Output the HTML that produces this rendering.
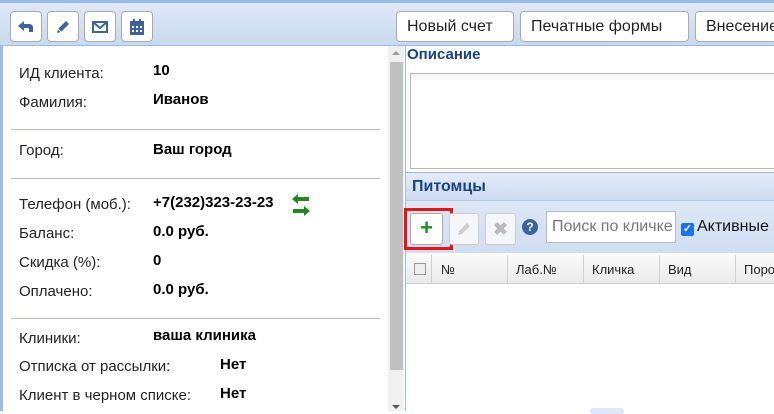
<!DOCTYPE html>
<html><head><meta charset="utf-8"><style>
*{box-sizing:border-box;margin:0;padding:0}
body{width:774px;height:411px;overflow:hidden;position:relative;background:#fff;font-family:"Liberation Sans",Arial,sans-serif;font-size:15px;color:#000}
.a{position:absolute}
.tb{left:0;top:0;width:774px;height:46px;background:linear-gradient(#dfe8f6,#c9d9ef);border-top:3px solid #99bbe8;border-bottom:1px solid #99bbe8}
.ib{position:absolute;top:8px;width:32px;height:31px;background:#fff;border:1px solid #aaa;border-radius:4px;display:flex;align-items:center;justify-content:center}
.tbtn{position:absolute;top:8px;height:31px;background:#fff;border:1px solid #aaa;border-radius:4px;font-size:16px;line-height:29px;padding:0 10px;color:#222;white-space:nowrap}
.lb{position:absolute;left:19px;font-size:15px;color:#222}
.v{position:absolute;font-weight:bold;font-size:15px}
.sep{position:absolute;left:11px;width:369px;height:1px;background:#bbbbcc}
</style></head><body>
<div class="a" style="left:0;top:46px;width:3px;height:365px;background:#99bbe8"></div>
<div class="a tb">
 <div class="ib" style="left:10px"><svg width="18" height="14" viewBox="0 0 18 14"><path d="M1 6 L7 1 V4 H12 Q16 4 16 8 V12 H12 V9 Q12 8 11 8 H7 V11 Z" fill="#3a63a0"/></svg></div>
 <div class="ib" style="left:47px"><svg width="16" height="16" viewBox="0 0 16 16"><path d="M2 14 L3 10 L11 2 L14 5 L6 13 Z" fill="#3a63a0"/><path d="M3 10 L6 13" stroke="#fff" stroke-width="1"/></svg></div>
 <div class="ib" style="left:84px"><svg width="16" height="12" viewBox="0 0 16 12"><rect x="1" y="1" width="14" height="10" fill="none" stroke="#3a63a0" stroke-width="2"/><path d="M1 1 L8 7 L15 1" fill="none" stroke="#3a63a0" stroke-width="2"/></svg></div>
 <div class="ib" style="left:121px"><svg width="14" height="16" viewBox="0 0 14 16"><rect x="0" y="2" width="14" height="14" fill="#3a63a0"/><rect x="3" y="0" width="2" height="4" fill="#3a63a0"/><rect x="9" y="0" width="2" height="4" fill="#3a63a0"/><g fill="#fff"><rect x="2" y="7" width="2" height="2"/><rect x="6" y="7" width="2" height="2"/><rect x="10" y="7" width="2" height="2"/><rect x="2" y="11" width="2" height="2"/><rect x="6" y="11" width="2" height="2"/><rect x="10" y="11" width="2" height="2"/></g></svg></div>
 <div class="tbtn" style="left:396px;width:118px">Новый счет</div>
 <div class="tbtn" style="left:520px;width:169px">Печатные формы</div>
 <div class="tbtn" style="left:695px;width:100px">Внесение</div>
</div>

<div class="lb" style="top:65px">ИД клиента:</div><div class="v" style="left:153px;top:62px">10</div>
<div class="lb" style="top:94px">Фамилия:</div><div class="v" style="left:153px;top:91px">Иванов</div>
<div class="sep" style="top:129px"></div>
<div class="lb" style="top:142px">Город:</div><div class="v" style="left:153px;top:141px">Ваш город</div>
<div class="sep" style="top:178px"></div>
<div class="lb" style="top:196px">Телефон (моб.):</div><div class="v" style="left:153px;top:194px">+7(232)323-23-23</div>
<svg class="a" style="left:291px;top:193px" width="20" height="24" viewBox="0 0 20 24"><path d="M1 6 L7 1 V4 H18 V8 H7 V11 Z" fill="#1e8a1e"/><path d="M19 18 L13 13 V16 H2 V20 H13 V23 Z" fill="#1e8a1e"/></svg>
<div class="lb" style="top:225px">Баланс:</div><div class="v" style="left:153px;top:223px">0.0 руб.</div>
<div class="lb" style="top:254px">Скидка (%):</div><div class="v" style="left:153px;top:252px">0</div>
<div class="lb" style="top:283px">Оплачено:</div><div class="v" style="left:153px;top:281px">0.0 руб.</div>
<div class="sep" style="top:318px"></div>
<div class="lb" style="top:330px">Клиники:</div><div class="v" style="left:153px;top:327px">ваша клиника</div>
<div class="lb" style="top:358px">Отписка от рассылки:</div><div class="v" style="left:220px;top:356px">Нет</div>
<div class="lb" style="top:387px">Клиент в черном списке:</div><div class="v" style="left:220px;top:385px">Нет</div>

<div class="a" style="left:388px;top:46px;width:16px;height:365px;background:#f0f0f0"></div>
<div class="a" style="left:390px;top:62px;width:13px;height:308px;background:#c0c0c0"></div>
<div class="a" style="left:392px;top:51px;width:0;height:0;border:4px solid transparent;border-bottom-color:#999;border-top:none"></div>
<div class="a" style="left:392px;top:405px;width:0;height:0;border:4px solid transparent;border-top-color:#555;border-bottom:none"></div>

<div class="a" style="left:405px;top:46px;width:1px;height:365px;background:#99bbe8"></div>
<div class="a" style="left:407px;top:46px;font-weight:bold;color:#15428b;font-size:15px">Описание</div>
<div class="a" style="left:410px;top:73px;width:370px;height:96px;border:1px solid #b5b8c8;background:linear-gradient(#f3f3f3,#fff 8px)"></div>

<div class="a" style="left:406px;top:172px;width:368px;height:28px;background:linear-gradient(#e3ebf7,#cedcf0);border-top:1px solid #99bbe8"><div style="position:absolute;left:6px;top:5px;font-weight:bold;color:#15428b;font-size:16px">Питомцы</div></div>
<div class="a" style="left:406px;top:200px;width:368px;height:53px;background:linear-gradient(#dde7f5,#d0def2);border-top:1px solid #b8cbe6"></div>
<div class="a" style="left:404px;top:208px;width:49px;height:42px;border:3px solid #ee1111"></div>
<div class="a" style="left:410px;top:213px;width:33px;height:32px;background:#fff;border:1px solid #aaa;border-radius:3px;color:#1e8a1e;font-weight:bold;font-size:22px;line-height:28px;text-align:center">+</div>
<div class="a" style="left:449px;top:213px;width:30px;height:32px;background:#f4f6fa;border:1px solid #ccc;border-radius:3px;display:flex;align-items:center;justify-content:center"><svg width="16" height="16" viewBox="0 0 16 16"><path d="M2 14 L3 10 L11 2 L14 5 L6 13 Z" fill="#cfcfcf"/></svg></div>
<div class="a" style="left:485px;top:213px;width:31px;height:32px;background:#f4f6fa;border:1px solid #ccc;border-radius:3px;color:#bbb;font-weight:bold;font-size:18px;line-height:30px;text-align:center">✖</div>
<div class="a" style="left:522px;top:219px;width:16px;height:16px;border-radius:50%;background:#3a63a0;color:#fff;font-weight:bold;font-size:12px;line-height:16px;text-align:center">?</div>
<div class="a" style="left:546px;top:211px;width:130px;height:32px;background:#fff;border:1px solid #b5b8c8;color:#777;font-size:16px;line-height:30px;padding-left:5px;white-space:nowrap;overflow:hidden">Поиск по кличке</div>
<div class="a" style="left:681px;top:223px;width:13px;height:13px;background:#1a73e8;border-radius:2px;color:#fff;font-size:11px;line-height:13px;text-align:center;font-weight:bold">✓</div>
<div class="a" style="left:697px;top:218px;font-size:16px;color:#111">Активные</div>

<div class="a" style="left:406px;top:255px;width:368px;height:29px;background:linear-gradient(#fafafa,#eaeaea);border-bottom:1px solid #d0d0d0;font-size:13px;color:#222">
 <div style="position:absolute;left:8px;top:8px;width:12px;height:12px;border:1px solid #999;background:#eee"></div>
 <div style="position:absolute;left:25px;top:0;width:1px;height:28px;background:#d0d0d0"></div>
 <div style="position:absolute;left:35px;top:7px">№</div>
 <div style="position:absolute;left:101px;top:0;width:1px;height:28px;background:#d0d0d0"></div>
 <div style="position:absolute;left:110px;top:7px">Лаб.№</div>
 <div style="position:absolute;left:177px;top:0;width:1px;height:28px;background:#d0d0d0"></div>
 <div style="position:absolute;left:186px;top:7px">Кличка</div>
 <div style="position:absolute;left:253px;top:0;width:1px;height:28px;background:#d0d0d0"></div>
 <div style="position:absolute;left:262px;top:7px">Вид</div>
 <div style="position:absolute;left:329px;top:0;width:1px;height:28px;background:#d0d0d0"></div>
 <div style="position:absolute;left:338px;top:7px">Пород</div>
</div>
<div class="a" style="left:590px;top:408px;width:34px;height:6px;border-radius:6px;background:#dde8fa"></div>
</body></html>
